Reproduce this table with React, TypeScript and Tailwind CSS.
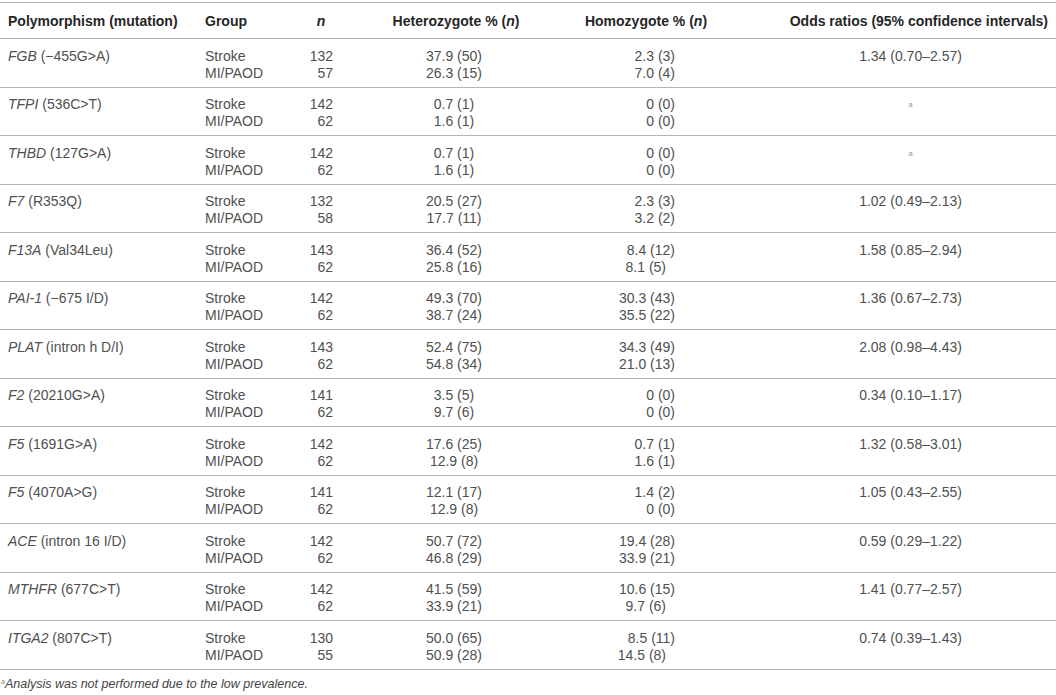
import React from "react";

type Row = { n: string; het: string; hom: string; homPad?: boolean };
type Group = { gene: string; rest: string; odds: string; rows: [Row, Row] };

const groups: Group[] = [
  { gene: "FGB", rest: " (−455G>A)", odds: "1.34 (0.70–2.57)", rows: [{ n: "132", het: "37.9 (50)", hom: "2.3 (3)" }, { n: "57", het: "26.3 (15)", hom: "7.0 (4)" }] },
  { gene: "TFPI", rest: " (536C>T)", odds: "a", rows: [{ n: "142", het: "0.7 (1)", hom: "0 (0)" }, { n: "62", het: "1.6 (1)", hom: "0 (0)" }] },
  { gene: "THBD", rest: " (127G>A)", odds: "a", rows: [{ n: "142", het: "0.7 (1)", hom: "0 (0)" }, { n: "62", het: "1.6 (1)", hom: "0 (0)" }] },
  { gene: "F7", rest: " (R353Q)", odds: "1.02 (0.49–2.13)", rows: [{ n: "132", het: "20.5 (27)", hom: "2.3 (3)" }, { n: "58", het: "17.7 (11)", hom: "3.2 (2)" }] },
  { gene: "F13A", rest: " (Val34Leu)", odds: "1.58 (0.85–2.94)", rows: [{ n: "143", het: "36.4 (52)", hom: "8.4 (12)" }, { n: "62", het: "25.8 (16)", hom: "8.1 (5)", homPad: true }] },
  { gene: "PAI-1", rest: " (−675 I/D)", odds: "1.36 (0.67–2.73)", rows: [{ n: "142", het: "49.3 (70)", hom: "30.3 (43)" }, { n: "62", het: "38.7 (24)", hom: "35.5 (22)" }] },
  { gene: "PLAT", rest: " (intron h D/I)", odds: "2.08 (0.98–4.43)", rows: [{ n: "143", het: "52.4 (75)", hom: "34.3 (49)" }, { n: "62", het: "54.8 (34)", hom: "21.0 (13)" }] },
  { gene: "F2", rest: " (20210G>A)", odds: "0.34 (0.10–1.17)", rows: [{ n: "141", het: "3.5 (5)", hom: "0 (0)" }, { n: "62", het: "9.7 (6)", hom: "0 (0)" }] },
  { gene: "F5", rest: " (1691G>A)", odds: "1.32 (0.58–3.01)", rows: [{ n: "142", het: "17.6 (25)", hom: "0.7 (1)" }, { n: "62", het: "12.9 (8)", hom: "1.6 (1)" }] },
  { gene: "F5", rest: " (4070A>G)", odds: "1.05 (0.43–2.55)", rows: [{ n: "141", het: "12.1 (17)", hom: "1.4 (2)" }, { n: "62", het: "12.9 (8)", hom: "0 (0)" }] },
  { gene: "ACE", rest: " (intron 16 I/D)", odds: "0.59 (0.29–1.22)", rows: [{ n: "142", het: "50.7 (72)", hom: "19.4 (28)" }, { n: "62", het: "46.8 (29)", hom: "33.9 (21)" }] },
  { gene: "MTHFR", rest: " (677C>T)", odds: "1.41 (0.77–2.57)", rows: [{ n: "142", het: "41.5 (59)", hom: "10.6 (15)" }, { n: "62", het: "33.9 (21)", hom: "9.7 (6)", homPad: true }] },
  { gene: "ITGA2", rest: " (807C>T)", odds: "0.74 (0.39–1.43)", rows: [{ n: "130", het: "50.0 (65)", hom: "8.5 (11)" }, { n: "55", het: "50.9 (28)", hom: "14.5 (8)", homPad: true }] },
];

export default function App() {
  return (
    <div className="h-[695px] w-[1056px] bg-white pt-[2px] font-['Liberation_Sans',Arial,sans-serif] text-[14px] text-[#505050]">
      {/* header */}
      <div className="flex h-[37px] items-center border-y border-[#b4b4b4] pt-[1px] font-bold text-[#262626]">
        <div className="w-[205px] pl-2">Polymorphism (mutation)</div>
        <div className="w-[95px]">Group</div>
        <div className="w-[42px] text-center italic">n</div>
        <div className="w-[228px] text-center">
          Heterozygote % (<i>n</i>)
        </div>
        <div className="w-[152px] text-center">
          Homozygote % (<i>n</i>)
        </div>
        <div className="flex-1 pr-2 text-right">Odds ratios (95% confidence intervals)</div>
      </div>

      {groups.map((g, gi) => (
        <div key={gi} className="flex h-[48.5px] border-b border-[#b4b4b4] pt-[8.5px] leading-[17px]">
          <div className="w-[205px] pl-2">
            <i>{g.gene}</i>
            {g.rest}
          </div>
          <div className="w-[95px]">
            <div>Stroke</div>
            <div>MI/PAOD</div>
          </div>
          <div className="w-[33px] text-right">
            {g.rows.map((r, i) => (
              <div key={i}>{r.n}</div>
            ))}
          </div>
          <div className="w-[242px] text-center">
            {g.rows.map((r, i) => (
              <div key={i}>{r.het}</div>
            ))}
          </div>
          <div className="w-[100px] text-right">
            {g.rows.map((r, i) => (
              <div key={i} className={r.homPad ? "pr-[9px]" : ""}>
                {r.hom}
              </div>
            ))}
          </div>
          <div className="flex-1 pl-[90px] text-center">
            {g.odds === "a" ? (
              <span className="relative -top-[2px] text-[8px] text-[#999]">a</span>
            ) : (
              g.odds
            )}
          </div>
        </div>
      ))}

      <div className="mt-[6px] pl-[1px] text-[12.5px] italic leading-[16px] text-[#444]">
        <sup className="text-[7px] text-[#888]">a</sup>Analysis was not performed due to the low prevalence.
      </div>
    </div>
  );
}
